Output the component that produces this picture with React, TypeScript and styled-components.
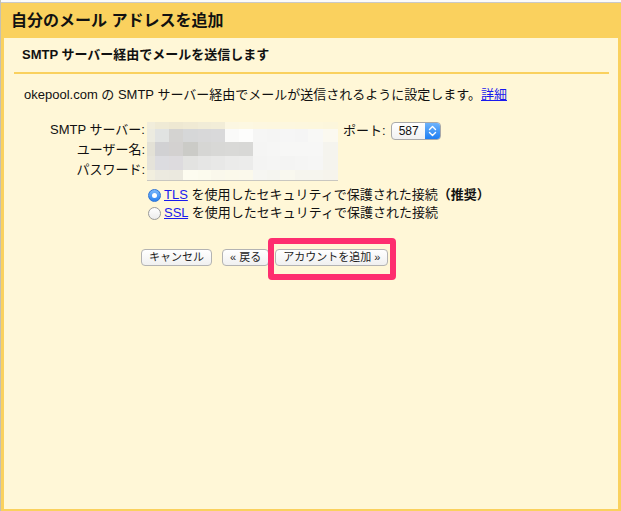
import React from "react";
import styled, { createGlobalStyle } from "styled-components";

const GlobalStyle = createGlobalStyle`
  html, body {
    margin: 0;
    padding: 0;
    background: #ffffff;
  }
  body {
    font-family: "Liberation Sans", "Noto Sans CJK JP", sans-serif;
    color: #222;
  }
`;

const Window = styled.div`
  width: 621px;
  height: 511px;
  display: flex;
  flex-direction: column;
  box-sizing: border-box;
  border-left: 1px solid #c4c0b4;
  background: #ffffff;
`;

const TopStrip = styled.div`
  height: 2px;
  background: #fbfbfb;
  border-bottom: 1px solid #c9c9c9;
  flex-shrink: 0;
`;

const Dialog = styled.div`
  flex: 1;
  display: flex;
  flex-direction: column;
  background: #fad15e;
  padding: 0 3px 2px 3px;
`;

const Header = styled.div`
  height: 35px;
  display: flex;
  align-items: center;
  padding-left: 7px;
  flex-shrink: 0;
`;

const Title = styled.h1`
  margin: 0;
  font-size: 16px;
  line-height: 20px;
  font-weight: bold;
  color: #111;
`;

const Body = styled.div`
  flex: 1;
  background: #fff7d7;
  display: flex;
  flex-direction: column;
`;

const SubHeading = styled.h2`
  margin: 9px 0 0 0;
  padding-left: 18px;
  font-size: 13px;
  line-height: 16px;
  font-weight: bold;
  color: #111;
`;

const Rule = styled.div`
  height: 2px;
  margin: 9px 9px 0 10px;
  background: #fad15e;
`;

const Intro = styled.p`
  margin: 12px 0 0 0;
  padding-left: 20px;
  font-size: 13px;
  line-height: 18px;
  color: #111;
`;

const Link = styled.a`
  color: #1a1aee;
  text-decoration: underline;
  cursor: pointer;
`;

const Form = styled.div`
  margin-top: 16px;
  display: flex;
  align-items: flex-start;
`;

const Labels = styled.div`
  width: 141px;
  display: flex;
  flex-direction: column;
  align-items: flex-end;
`;

const Label = styled.div`
  font-size: 13px;
  line-height: 20px;
  color: #111;
  white-space: nowrap;
`;

const Mosaic = styled.svg`
  display: block;
  margin: 2px 0 0 2px;
`;

const PortGroup = styled.div`
  display: flex;
  align-items: center;
  gap: 5px;
  margin: 1px 0 0 5px;
`;

const Select = styled.div`
  width: 50px;
  height: 18px;
  box-sizing: border-box;
  display: flex;
  border: 1px solid #a9a9a9;
  border-radius: 4px;
  background: linear-gradient(#ffffff, #f1f1f1);
  overflow: hidden;
`;

const SelectValue = styled.span`
  flex: 1;
  font-size: 12px;
  line-height: 16px;
  padding-left: 7px;
  color: #111;
`;

const Stepper = styled.span`
  width: 15px;
  display: flex;
  align-items: center;
  justify-content: center;
  background: linear-gradient(#6db3fb, #1f7ef2);
`;

const Radios = styled.div`
  margin-top: 5px;
  padding-left: 144px;
  display: flex;
  flex-direction: column;
`;

const RadioRow = styled.label`
  display: flex;
  align-items: center;
  gap: 3px;
  font-size: 13px;
  line-height: 18px;
  color: #111;
  white-space: nowrap;
`;

const RadioDot = styled.span<{ $checked?: boolean }>`
  width: 13px;
  height: 13px;
  box-sizing: border-box;
  border-radius: 50%;
  display: flex;
  align-items: center;
  justify-content: center;
  border: 1px solid ${(p) => (p.$checked ? "#2d73d6" : "#9a9a9a")};
  background: ${(p) =>
    p.$checked
      ? "linear-gradient(#7ab8fb, #2a82f0)"
      : "linear-gradient(#ffffff, #ececec)"};
  &::after {
    content: "";
    width: 5px;
    height: 5px;
    border-radius: 50%;
    background: #fff;
    display: ${(p) => (p.$checked ? "block" : "none")};
  }
`;

const Strong = styled.b`
  font-weight: bold;
`;

const Buttons = styled.div`
  margin-top: 27px;
  padding-left: 137px;
  display: flex;
  align-items: center;
`;

const Button = styled.button<{ $gap?: number }>`
  height: 17px;
  margin-left: ${(p) => p.$gap ?? 0}px;
  padding: 0 7px;
  box-sizing: border-box;
  font-family: "Liberation Sans", "Noto Sans CJK JP", sans-serif;
  font-size: 11px;
  line-height: 15px;
  color: #222;
  border: 1px solid #b3b3b3;
  border-radius: 4px;
  background: linear-gradient(#ffffff, #f0f0f0);
  white-space: nowrap;
`;

const Spot = styled.div`
  position: relative;
  margin-left: 6px;
  display: flex;
`;

const Highlight = styled.div`
  position: absolute;
  top: -11px;
  left: -7px;
  right: -8px;
  bottom: -14px;
  border: 6px solid #fe2e6f;
  border-radius: 4px;
  pointer-events: none;
`;

const colWidths = [8, 14, 14, 15, 13, 14, 14, 14, 14, 13, 15, 13, 15, 15];
const rowHeights = [7, 13, 14, 14, 10];
const rowColors = [
  ["#f1eddb", "#efead5", "#eee8d2", "#f0ead4", "#f1ecd7", "#f2edd8", "#fcf7e2", "#fdf8e2", "#fdf7e0", "#fdf7df", "#fdf7df", "#fdf7de", "#fdf7dd", "#fcf6dc"],
  ["#ecebe0", "#e1e3e2", "#d4d3d1", "#d6d7d8", "#d8d8d9", "#d9d9da", "#fafaf9", "#fdfdfc", "#f6f6f5", "#f5f5f4", "#f6f6f6", "#f5f5f5", "#f8f8f6", "#fbf9f0"],
  ["#e3e1d6", "#d1d1d3", "#d3d1d0", "#cbcbc7", "#d6d6d4", "#d8d8d6", "#d9d9d7", "#d8d8d6", "#f5f5f4", "#f6f6f5", "#f7f7f6", "#f7f7f6", "#f7f7f6", "#f5f4ee"],
  ["#e5e3da", "#dcdce0", "#dddbde", "#e3e3e1", "#e6e6e5", "#e8e8e7", "#ebebea", "#ececeb", "#f4f4f3", "#f5f5f4", "#f4f4f3", "#f5f5f4", "#f6f6f5", "#f5f4ee"],
  ["#f2efdf", "#eceae0", "#ebe9df", "#fdfcf0", "#fcfbee", "#faf8ec", "#fbf9eb", "#fbf9ec", "#f6f6f2", "#f5f5f0", "#f9f8ef", "#f6f5ee", "#f6f5ee", "#f6f4ec"],
];

function BlurredFields() {
  const width = colWidths.reduce((a, b) => a + b, 0);
  const height = rowHeights.reduce((a, b) => a + b, 0);
  const cells: React.ReactNode[] = [];
  let y = 0;
  rowHeights.forEach((h, r) => {
    let x = 0;
    colWidths.forEach((w, c) => {
      cells.push(<rect key={`${r}-${c}`} x={x} y={y} width={w} height={h} fill={rowColors[r][c]} />);
      x += w;
    });
    y += h;
  });
  return (
    <Mosaic width={width} height={height + 1} viewBox={`0 0 ${width} ${height + 1}`}>
      {cells}
      <rect x={0} y={height} width={width} height={1} fill="#c9c7c0" />
    </Mosaic>
  );
}

function StepperIcon() {
  return (
    <svg width="9" height="12" viewBox="0 0 9 12" fill="none" stroke="#fff" strokeWidth="1.4" strokeLinecap="round" strokeLinejoin="round">
      <path d="M1.5 4.5 L4.5 1.5 L7.5 4.5" />
      <path d="M1.5 7.5 L4.5 10.5 L7.5 7.5" />
    </svg>
  );
}

export default function App() {
  return (
    <>
      <GlobalStyle />
      <Window>
        <TopStrip />
        <Dialog>
          <Header>
            <Title>自分のメール アドレスを追加</Title>
          </Header>
          <Body>
            <SubHeading>SMTP サーバー経由でメールを送信します</SubHeading>
            <Rule />
            <Intro>
              okepool.com の SMTP サーバー経由でメールが送信されるように設定します。<Link>詳細</Link>
            </Intro>
            <Form>
              <Labels>
                <Label>SMTP サーバー:</Label>
                <Label>ユーザー名:</Label>
                <Label>パスワード:</Label>
              </Labels>
              <BlurredFields />
              <PortGroup>
                <Label>ポート:</Label>
                <Select>
                  <SelectValue>587</SelectValue>
                  <Stepper>
                    <StepperIcon />
                  </Stepper>
                </Select>
              </PortGroup>
            </Form>
            <Radios>
              <RadioRow>
                <RadioDot $checked />
                <span>
                  <Link>TLS</Link> を使用したセキュリティで保護された接続<Strong>（推奨）</Strong>
                </span>
              </RadioRow>
              <RadioRow>
                <RadioDot />
                <span>
                  <Link>SSL</Link> を使用したセキュリティで保護された接続
                </span>
              </RadioRow>
            </Radios>
            <Buttons>
              <Button>キャンセル</Button>
              <Button $gap={10}>« 戻る</Button>
              <Spot>
                <Button>アカウントを追加 »</Button>
                <Highlight />
              </Spot>
            </Buttons>
          </Body>
        </Dialog>
      </Window>
    </>
  );
}
